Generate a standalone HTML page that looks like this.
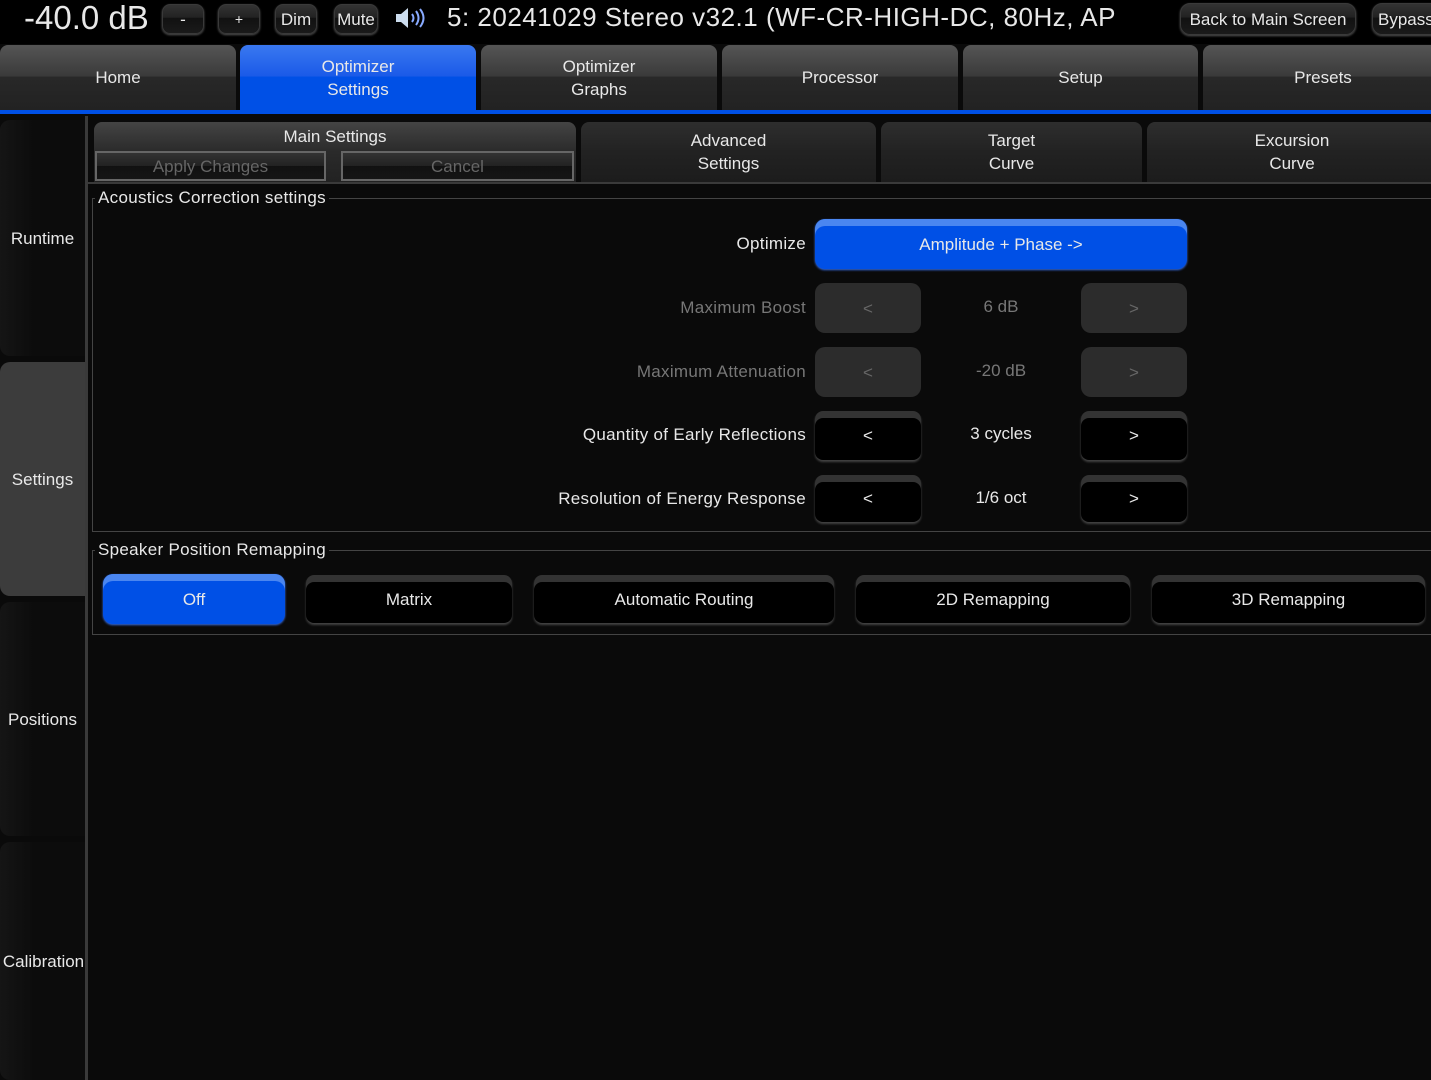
<!DOCTYPE html>
<html><head><style>
*{box-sizing:border-box;margin:0;padding:0}
body{width:1431px;height:1080px;background:#0a0a0a;position:relative;overflow:hidden;font-family:"Liberation Sans",sans-serif;color:#e8e8e8;font-size:17px}
.a{position:absolute}
.c{display:flex;align-items:center;justify-content:center;text-align:center;line-height:23px}
.tb{background:linear-gradient(#555 0%,#3a3a3a 48%,#282828 49%,#222 100%);border-radius:8px 8px 0 0}
.sb{background:linear-gradient(90deg,#151515,#0c0c0c 40%,#0c0c0c);border-radius:10px 0 0 10px}
.hb{border-radius:8px;background:linear-gradient(#333 0%,#222 45%,#111 46%,#1a1a1a);border:1px solid #3a3a3a;box-shadow:0 1px 2px #555}
.blue{background:#0050e6;border-radius:10px;box-shadow:inset 0 7px 0 #4a86f0,0 1px 2px #3a70e8}
.blk{background:#000;border-radius:8px;box-shadow:inset 0 7px 0 #333,0 2px 2px #444}
.dis{background:#2c2c2c;border-radius:10px;color:#666}
.grp{border:1px solid #444}
.leg{background:#0a0a0a;padding:0 3px}
.lbl{text-align:right;width:520px;left:286px;letter-spacing:0.3px}
</style></head><body>
<div class="a" style="left:0;top:0;width:1431px;height:44px;background:#000"></div>
<div class="a" style="left:24px;top:0;font-size:33px;line-height:36px">-40.0 dB</div>
<div class="a hb c" style="left:162px;top:4px;width:42px;height:30px">-</div>
<div class="a hb c" style="left:218px;top:4px;width:42px;height:30px;font-size:14px">+</div>
<div class="a hb c" style="left:275px;top:4px;width:42px;height:30px">Dim</div>
<div class="a hb c" style="left:334px;top:4px;width:44px;height:30px">Mute</div>
<svg class="a" style="left:394px;top:7px" width="34" height="22" viewBox="0 0 34 22"><path d="M2 7h5l7-6v20l-7-6H2z" fill="#cde"/><path d="M18 7q3 4 0 8M22 4q5 7 0 14M26 2q7 9 0 18" stroke="#8af" stroke-width="2" fill="none"/></svg>
<div class="a" style="left:447px;top:1px;font-size:26px;line-height:32px;letter-spacing:0.5px">5: 20241029 Stereo v32.1 (WF-CR-HIGH-DC, 80Hz, AP</div>
<div class="a hb c" style="left:1180px;top:3px;width:176px;height:32px;border-radius:10px">Back to Main Screen</div>
<div class="a hb c" style="left:1372px;top:3px;width:80px;height:32px;border-radius:10px;justify-content:flex-start;padding-left:5px">Bypass</div>

<div class="a tb c" style="left:0;top:45px;width:236px;height:65px">Home</div>
<div class="a c" style="left:240px;top:45px;width:236px;height:65px;background:linear-gradient(#3a78f0 0%,#1a5ae8 48%,#0050e6 49%);border-radius:8px 8px 0 0">Optimizer<br>Settings</div>
<div class="a tb c" style="left:481px;top:45px;width:236px;height:65px">Optimizer<br>Graphs</div>
<div class="a tb c" style="left:722px;top:45px;width:236px;height:65px">Processor</div>
<div class="a tb c" style="left:963px;top:45px;width:235px;height:65px">Setup</div>
<div class="a tb c" style="left:1203px;top:45px;width:240px;height:65px">Presets</div>
<div class="a" style="left:0;top:110px;width:1431px;height:4px;background:#0050e6"></div>

<div class="a sb c" style="left:0;top:120px;width:85px;height:236px">Runtime</div>
<div class="a c" style="left:0;top:362px;width:85px;height:234px;background:#3c3c3c;border-radius:10px 0 0 10px">Settings</div>
<div class="a sb c" style="left:0;top:602px;width:85px;height:234px">Positions</div>
<div class="a sb c" style="left:0;top:842px;width:87px;height:238px">Calibration</div>
<div class="a" style="left:85px;top:116px;width:3px;height:964px;background:#3a3a3a"></div>

<div class="a tb" style="left:94px;top:122px;width:482px;height:60px;background:linear-gradient(#444,#2a2a2a 50%,#222)"></div>
<div class="a" style="left:94px;top:127px;width:482px;text-align:center">Main Settings</div>
<div class="a c" style="left:95px;top:151px;width:231px;height:30px;border:2px solid #666;color:#666;background:linear-gradient(#333,#222 50%,#111 51%,#151515)">Apply Changes</div>
<div class="a c" style="left:341px;top:151px;width:233px;height:30px;border:2px solid #666;color:#666;background:linear-gradient(#333,#222 50%,#111 51%,#151515)">Cancel</div>
<div class="a tb c" style="left:581px;top:122px;width:295px;height:60px;background:linear-gradient(#2e2e2e,#222 50%,#1c1c1c)">Advanced<br>Settings</div>
<div class="a tb c" style="left:881px;top:122px;width:261px;height:60px;background:linear-gradient(#2e2e2e,#222 50%,#1c1c1c)">Target<br>Curve</div>
<div class="a tb c" style="left:1147px;top:122px;width:290px;height:60px;background:linear-gradient(#2e2e2e,#222 50%,#1c1c1c)">Excursion<br>Curve</div>
<div class="a" style="left:88px;top:182px;width:1343px;height:2px;background:#3a3a3a"></div>

<div class="a grp" style="left:92px;top:198px;width:1345px;height:334px"></div>
<div class="a leg" style="left:95px;top:188px;letter-spacing:0.3px">Acoustics Correction settings</div>
<div class="a lbl" style="top:234px">Optimize</div>
<div class="a blue c" style="left:815px;top:219px;width:372px;height:50px">Amplitude + Phase -&gt;</div>

<div class="a lbl" style="top:298px;color:#777">Maximum Boost</div>
<div class="a dis c" style="left:815px;top:283px;width:106px;height:50px">&lt;</div>
<div class="a c" style="left:921px;top:281px;width:160px;height:50px;color:#777">6 dB</div>
<div class="a dis c" style="left:1081px;top:283px;width:106px;height:50px">&gt;</div>

<div class="a lbl" style="top:362px;color:#777">Maximum Attenuation</div>
<div class="a dis c" style="left:815px;top:347px;width:106px;height:50px">&lt;</div>
<div class="a c" style="left:921px;top:345px;width:160px;height:50px;color:#777">-20 dB</div>
<div class="a dis c" style="left:1081px;top:347px;width:106px;height:50px">&gt;</div>

<div class="a lbl" style="top:425px">Quantity of Early Reflections</div>
<div class="a blk c" style="left:815px;top:411px;width:106px;height:49px">&lt;</div>
<div class="a c" style="left:921px;top:411px;width:160px;height:44px">3 cycles</div>
<div class="a blk c" style="left:1081px;top:411px;width:106px;height:49px">&gt;</div>

<div class="a lbl" style="top:489px">Resolution of Energy Response</div>
<div class="a blk c" style="left:815px;top:475px;width:106px;height:47px">&lt;</div>
<div class="a c" style="left:921px;top:475px;width:160px;height:44px">1/6 oct</div>
<div class="a blk c" style="left:1081px;top:475px;width:106px;height:47px">&gt;</div>

<div class="a grp" style="left:92px;top:550px;width:1345px;height:85px"></div>
<div class="a leg" style="left:95px;top:540px;letter-spacing:0.3px">Speaker Position Remapping</div>
<div class="a blue c" style="left:103px;top:574px;width:182px;height:50px">Off</div>
<div class="a blk c" style="left:306px;top:575px;width:206px;height:48px">Matrix</div>
<div class="a blk c" style="left:534px;top:575px;width:300px;height:48px">Automatic Routing</div>
<div class="a blk c" style="left:856px;top:575px;width:274px;height:48px">2D Remapping</div>
<div class="a blk c" style="left:1152px;top:575px;width:273px;height:48px">3D Remapping</div>
</body></html>
